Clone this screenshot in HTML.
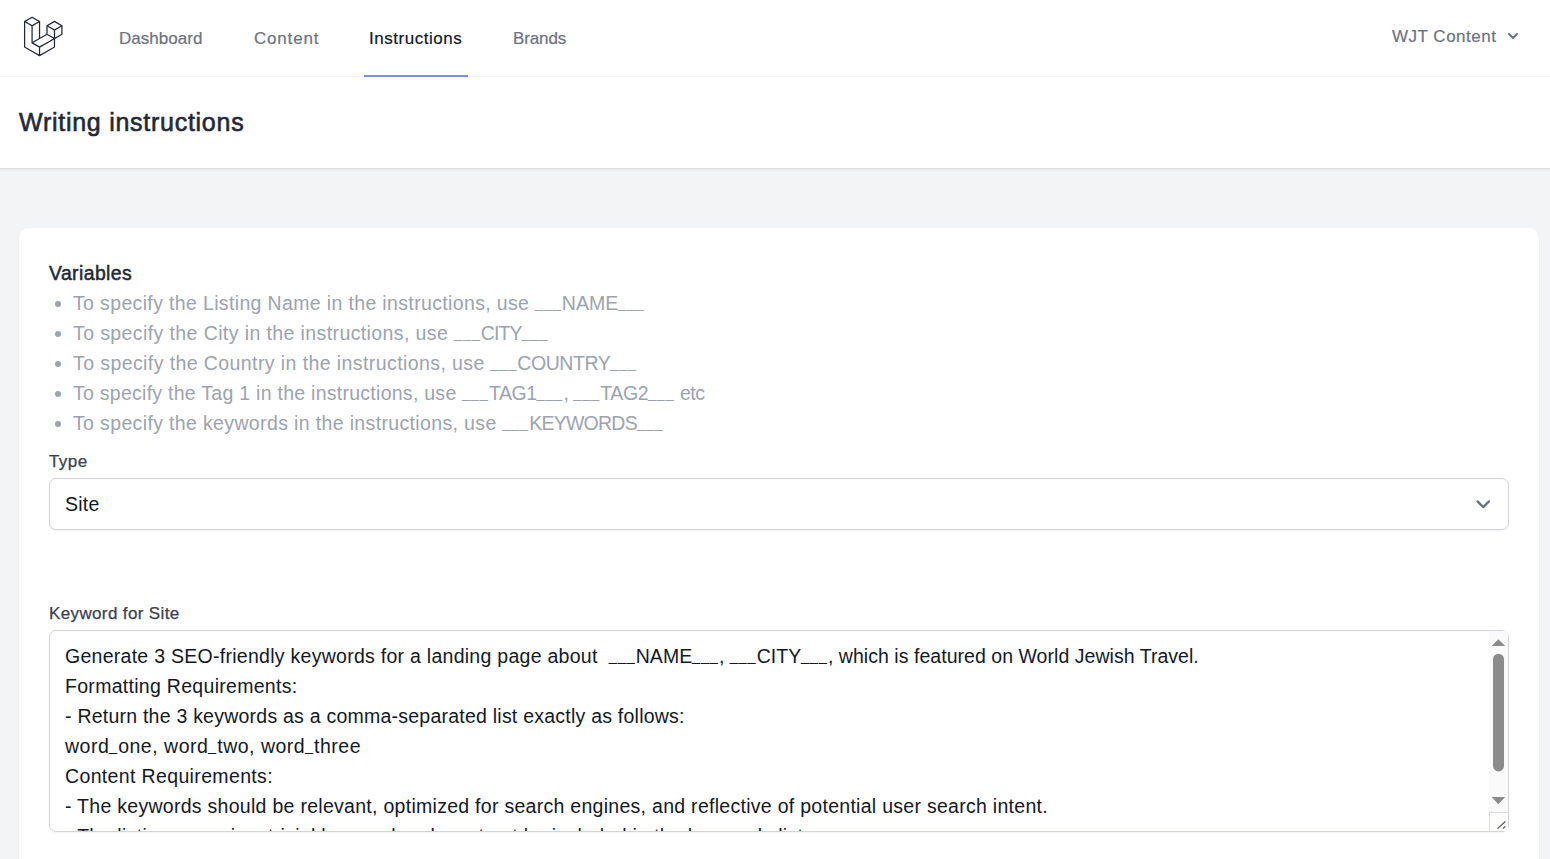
<!DOCTYPE html>
<html lang="en">
<head>
<meta charset="utf-8">
<title>Writing instructions</title>
<style>
  html, body { margin: 0; padding: 0; }
  body {
    width: 1550px; height: 859px; overflow: hidden; position: relative;
    background: #f3f4f6;
    font-family: "Liberation Sans", sans-serif;
    color: #111827;
    -webkit-font-smoothing: antialiased;
  }
  .abs { position: absolute; white-space: nowrap; line-height: 1; }
  nav { position: absolute; left: 0; top: 0; width: 1550px; height: 76px; background: #fff; border-bottom: 1px solid #f3f4f6; }
  .logo { position: absolute; left: 19px; top: 13.8px; width: 45px; height: 45px; }
  .navlink { font-size: 17px; color: #6b7280; top: 30px; -webkit-text-stroke: 0.2px; }
  .navlink.active { color: #111827; }
  .underline { position: absolute; left: 364px; top: 75px; width: 104px; height: 2px; background: #818cf8; }
  header { position: absolute; left: -10px; top: 77px; width: 1570px; height: 90.6px; background: #fff; box-shadow: 0 1.2px 3.6px 0 rgba(0,0,0,.1), 0 1.2px 2.4px -1.2px rgba(0,0,0,.1); }
  h2 { margin: 0; font-size: 25px; font-weight: 400; -webkit-text-stroke: 0.6px #1f2937; color: #1f2937; left: 29px; top: 33.4px; }
  .card { position: absolute; left: 19px; top: 228px; width: 1520px; height: 700px; background: #fff; border-radius: 10px; box-shadow: 0 1px 2px 0 rgba(0,0,0,.05); }
  .vars { font-size: 19.4px; font-weight: 400; -webkit-text-stroke: 0.5px #1f2937; color: #1f2937; left: 49px; top: 264px; }
  ul { margin: 0; padding: 0; list-style: none; }
  li.abs { font-size: 19.5px; color: #9ca3af; left: 73px; }
  .dot { position: absolute; left: 55px; width: 6.4px; height: 6.4px; border-radius: 50%; background: #9ca3af; }
  label.abs { font-size: 17px; color: #374151; left: 49px; -webkit-text-stroke: 0.25px #374151; }
  .field { position: absolute; left: 49px; width: 1458px; background: #fff; border: 1px solid #d1d5db; border-radius: 7px; box-shadow: 0 1px 2px 0 rgba(0,0,0,.05); }
  .select { top: 478px; height: 50px; }
  .textarea { top: 630px; height: 200px; }
  .ta-clip { position: absolute; left: 0; top: 0; width: 1439px; height: 200px; overflow: hidden; border-radius: 6px 0 0 6px; }
  .u { font-size: 13.5px; font-weight: 700; letter-spacing: 1.4px; position: relative; top: -1.3px; -webkit-text-stroke: 0.6px; }
  .sb-track { position:absolute; right:0; top:0; width:19px; height:200px; background:#fafafa; }
  .sb-svg { position:absolute; right:0; top:0; }
  .ta-line { font-size: 19.5px; color: #111827; left: 15px; }
</style>
</head>
<body>

<nav>
  <svg class="logo" viewBox="0 0 316 316" fill="#1f2937"><path d="M305.8 81.125C305.77 80.995 305.69 80.885 305.65 80.755C305.56 80.525 305.49 80.285 305.37 80.075C305.29 79.935 305.17 79.815 305.07 79.685C304.94 79.515 304.83 79.325 304.68 79.175C304.55 79.045 304.39 78.955 304.25 78.845C304.09 78.715 303.95 78.575 303.77 78.475L251.32 48.275C249.97 47.495 248.31 47.495 246.96 48.275L194.51 78.475C194.33 78.575 194.19 78.725 194.03 78.845C193.89 78.955 193.73 79.045 193.6 79.175C193.45 79.325 193.34 79.515 193.21 79.685C193.11 79.815 192.99 79.935 192.91 80.075C192.79 80.285 192.71 80.525 192.63 80.755C192.58 80.875 192.51 80.995 192.48 81.125C192.38 81.495 192.33 81.875 192.33 82.265V139.625L148.62 164.795V52.575C148.62 52.185 148.57 51.805 148.47 51.435C148.44 51.305 148.36 51.195 148.32 51.065C148.23 50.835 148.16 50.595 148.04 50.385C147.96 50.245 147.84 50.125 147.74 49.995C147.61 49.825 147.5 49.635 147.35 49.485C147.22 49.355 147.06 49.265 146.92 49.155C146.76 49.025 146.62 48.885 146.44 48.785L93.99 18.585C92.64 17.805 90.98 17.805 89.63 18.585L37.18 48.785C37 48.885 36.86 49.035 36.7 49.155C36.56 49.265 36.4 49.355 36.27 49.485C36.12 49.635 36.01 49.825 35.88 49.995C35.78 50.125 35.66 50.245 35.58 50.385C35.46 50.595 35.38 50.835 35.3 51.065C35.25 51.185 35.18 51.305 35.15 51.435C35.05 51.805 35 52.185 35 52.575V232.235C35 233.795 35.84 235.245 37.19 236.025L142.1 296.425C142.33 296.555 142.58 296.635 142.82 296.725C142.93 296.765 143.04 296.835 143.16 296.865C143.53 296.965 143.9 297.015 144.28 297.015C144.66 297.015 145.03 296.965 145.4 296.865C145.5 296.835 145.59 296.775 145.69 296.745C145.95 296.655 146.21 296.565 146.45 296.435L251.36 236.035C252.72 235.255 253.55 233.815 253.55 232.245V174.885L303.81 145.945C305.17 145.165 306 143.725 306 142.155V82.265C305.95 81.875 305.89 81.495 305.8 81.125ZM144.2 227.205L100.57 202.515L146.39 176.135L196.66 147.195L240.33 172.335L208.29 190.625L144.2 227.205ZM244.75 114.995V164.795L226.39 154.225L201.03 139.625V89.825L219.39 100.395L244.75 114.995ZM249.12 57.105L292.81 82.265L249.12 107.425L205.43 82.265L249.12 57.105ZM114.49 184.425L96.13 194.995V85.305L121.49 70.705L139.85 60.135V169.815L114.49 184.425ZM91.76 27.425L135.45 52.585L91.76 77.745L48.07 52.585L91.76 27.425ZM43.67 60.135L62.03 70.705L87.39 85.305V202.545V202.555V202.565C87.39 202.735 87.44 202.895 87.46 203.055C87.49 203.265 87.49 203.485 87.55 203.695V203.705C87.6 203.875 87.69 204.035 87.76 204.195C87.84 204.375 87.89 204.575 87.99 204.745C87.99 204.745 87.99 204.755 88 204.755C88.09 204.905 88.22 205.035 88.33 205.175C88.45 205.335 88.55 205.495 88.69 205.635L88.7 205.645C88.82 205.765 88.98 205.855 89.12 205.965C89.28 206.085 89.42 206.225 89.59 206.325C89.6 206.325 89.6 206.325 89.61 206.335C89.62 206.335 89.62 206.345 89.63 206.345L139.87 234.775V285.065L43.67 229.705V60.135ZM244.75 229.705L148.58 285.075V234.775L219.8 194.115L244.75 179.875V229.705ZM297.2 139.625L253.49 164.795V114.995L278.85 100.395L297.21 89.825V139.625H297.2Z"/></svg>
  <a class="abs navlink" id="n1" style="letter-spacing:0.027px; left:119px">Dashboard</a>
  <a class="abs navlink" id="n2" style="letter-spacing:0.808px; left:254px">Content</a>
  <a class="abs navlink active" id="n3" style="letter-spacing:0.536px; left:369px">Instructions</a>
  <a class="abs navlink" id="n4" style="letter-spacing:-0.123px; left:513px">Brands</a>
  <div class="underline"></div>
  <span class="abs navlink" id="n5" style="letter-spacing:0.506px; left:1392px; top:28px">WJT Content</span>
  <svg style="position:absolute; left:1503.05px; top:26px; width:20px; height:20px" viewBox="0 0 20 20" fill="#6b7280"><path fill-rule="evenodd" d="M5.293 7.293a1 1 0 011.414 0L10 10.586l3.293-3.293a1 1 0 111.414 1.414l-4 4a1 1 0 01-1.414 0l-4-4a1 1 0 010-1.414z" clip-rule="evenodd"/></svg>
</nav>

<header>
  <h2 class="abs" id="title" style="letter-spacing:0.732px; ">Writing instructions</h2>
</header>

<div class="card"></div>

<div class="abs vars" id="vars" style="letter-spacing:0.411px; ">Variables</div>
<ul>
  <li class="abs" id="l1" style="letter-spacing:0.354px; top:294px">To specify the Listing Name in the instructions, use <span class="u">___</span><span id="l1s" style="letter-spacing:0.027px">NAME<span class="u">___</span></span></li>
  <li class="abs" id="l2" style="letter-spacing:0.4px; top:324px">To specify the City in the instructions, use <span class="u">___</span><span id="l2s" style="letter-spacing:-0.881px">CITY<span class="u">___</span></span></li>
  <li class="abs" id="l3" style="letter-spacing:0.413px; top:354px">To specify the Country in the instructions, use <span class="u">___</span><span id="l3s" style="letter-spacing:-0.437px">COUNTRY<span class="u">___</span></span></li>
  <li class="abs" id="l4" style="letter-spacing:0.268px; top:384px">To specify the Tag 1 in the instructions, use <span class="u">___</span><span id="l4s" style="letter-spacing:-0.407px">TAG1<span class="u">___</span>, <span class="u">___</span>TAG2<span class="u">___</span> etc</span></li>
  <li class="abs" id="l5" style="letter-spacing:0.358px; top:414px">To specify the keywords in the instructions, use <span class="u">___</span><span id="l5s" style="letter-spacing:-0.75px">KEYWORDS<span class="u">___</span></span></li>
</ul>
<div class="dot" style="top:301px"></div>
<div class="dot" style="top:331px"></div>
<div class="dot" style="top:361px"></div>
<div class="dot" style="top:391px"></div>
<div class="dot" style="top:421px"></div>

<label class="abs" id="lab1" style="letter-spacing:0.412px; top:453px">Type</label>
<div class="field select">
  <span class="abs ta-line" id="site" style="letter-spacing:0.226px; top:16px">Site</span>
  <svg style="position:absolute; left:1418.75px; top:10.65px; width:28.5px; height:28.5px" viewBox="0 0 20 20" fill="none"><path stroke="#6b7280" stroke-linecap="round" stroke-linejoin="round" stroke-width="1.65" d="M6 8l4 4 4-4"/></svg>
</div>

<label class="abs" id="lab2" style="letter-spacing:0.366px; top:605px">Keyword for Site</label>
<div class="field textarea">
  <div class="sb-track"></div>
  <svg class="sb-svg" width="19" height="200" viewBox="0 0 19 200">
    <polygon points="2.6,15 16.2,15 9.4,8.2" fill="#8b8b8b"/>
    <rect x="4" y="22.7" width="11" height="117.7" rx="5.5" fill="#8b8b8b"/>
    <polygon points="2.6,166.1 16.2,166.1 9.4,173.3" fill="#8b8b8b"/>
    <rect x="0.5" y="181.5" width="19" height="19" fill="#fdfdfd" stroke="#dcdcdc" stroke-width="1"/>
    <path d="M8.5 197.6 L16.4 190.5 M13.8 197.6 L16.4 195.4" stroke="#555" stroke-width="1.2" fill="none"/>
  </svg>
  <div class="ta-clip">
  <span class="abs ta-line" id="t1" style="letter-spacing:0.273px; top:16px; white-space:pre">Generate 3 SEO-friendly keywords for a landing page about  <span class="u">___</span><span id="t1s" style="letter-spacing:0.039px">NAME<span class="u">___</span>, <span class="u">___</span>CITY<span class="u">___</span>, which is featured on World Jewish Travel.</span></span>
  <span class="abs ta-line" id="t2" style="letter-spacing:0.293px; top:46px">Formatting Requirements:</span>
  <span class="abs ta-line" id="t3" style="letter-spacing:0.233px; top:76px">- Return the 3 keywords as a comma-separated list exactly as follows:</span>
  <span class="abs ta-line" id="t4" style="letter-spacing:0.498px; top:106px">word<span class="u">_</span>one, word<span class="u">_</span>two, word<span class="u">_</span>three</span>
  <span class="abs ta-line" id="t5" style="letter-spacing:0.355px; top:136px">Content Requirements:</span>
  <span class="abs ta-line" id="t6" style="letter-spacing:0.282px; top:166px">- The keywords should be relevant, optimized for search engines, and reflective of potential user search intent.</span>
  <span class="abs ta-line" id="t7" style="letter-spacing:0.299px; top:196px">- The listing name is a trivial keyword and must not be included in the keywords list.</span>
  </div>
</div>

</body>
</html>
